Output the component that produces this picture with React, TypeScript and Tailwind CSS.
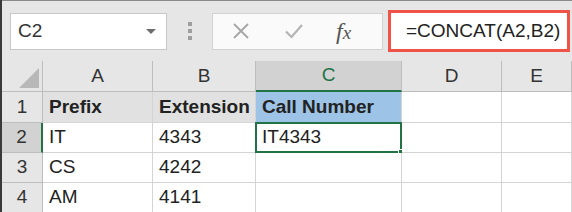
import React from 'react';

const cols = ['A', 'B', 'C', 'D', 'E'];

const rows = [
  { n: '1', cells: ['Prefix', 'Extension', 'Call Number', '', ''] },
  { n: '2', cells: ['IT', '4343', 'IT4343', '', ''] },
  { n: '3', cells: ['CS', '4242', '', '', ''] },
  { n: '4', cells: ['AM', '4141', '', '', ''] },
];

const rowH = ['h-[31px]', 'h-[30px]', 'h-[30px]', 'h-[30px]'];

export default function App() {
  return (
    <div
      className="w-[572px] h-[212px] overflow-hidden bg-white border-l-2 border-l-[#3a3a3a] text-[19px] text-[#222]"
      style={{ fontFamily: '"Liberation Sans", Arial, sans-serif' }}
    >
      {/* formula bar */}
      <div className="h-[61px] bg-[#e6e6e6] border-t border-t-[#8a8a8a] flex items-center">
        <div className="ml-[8px] w-[157px] h-[37px] bg-white border border-[#c8c8c8] flex items-center justify-between pl-[7px] pr-[10px]">
          <span className="text-[#333]">C2</span>
          <span className="w-0 h-0 border-l-[5px] border-r-[5px] border-t-[5px] border-l-transparent border-r-transparent border-t-[#6e6e6e]" />
        </div>
        <div className="ml-[21px] flex flex-col gap-[3px]">
          <span className="w-[4px] h-[4px] bg-[#9e9e9e]" />
          <span className="w-[4px] h-[4px] bg-[#9e9e9e]" />
          <span className="w-[4px] h-[4px] bg-[#9e9e9e]" />
        </div>
        <div className="ml-[20px] w-[171px] h-[37px] bg-[#fafafa] border border-[#d2d2d2] flex items-center">
          <svg className="ml-[19px]" width="18" height="18" viewBox="0 0 18 18">
            <path d="M2 2 L16 16 M16 2 L2 16" stroke="#a6a6a6" strokeWidth="1.8" fill="none" />
          </svg>
          <svg className="ml-[34px]" width="20" height="16" viewBox="0 0 20 16">
            <path d="M2 8.5 L7.5 14 L18 2" stroke="#b4b4b4" strokeWidth="2.2" fill="none" />
          </svg>
          <span
            className="ml-[32px] italic text-[#555] text-[24px] leading-none"
            style={{ fontFamily: '"Liberation Serif", "Times New Roman", serif' }}
          >
            f<span className="text-[19px]">x</span>
          </span>
        </div>
        <div className="ml-[5px] w-[182px] h-[42px] border-[3px] border-[#ef5247] bg-white flex items-center pl-[15px] text-[#222]">
          =CONCAT(A2,B2)
        </div>
      </div>

      {/* grid */}
      <div className="grid grid-cols-[41px_110px_103px_146px_100px_1fr]">
        {/* header row */}
        <div className="h-[31px] bg-[#e6e6e6] border-r border-b border-[#bdbdbd] relative">
          <svg className="absolute right-[3px] bottom-[3px]" width="20" height="20" viewBox="0 0 20 20">
            <path d="M20 0 L20 20 L0 20 Z" fill="#b8b8b8" />
          </svg>
        </div>
        {cols.map((c) => (
          <div
            key={c}
            className={
              c === 'C'
                ? 'h-[31px] bg-[#d2d2d2] border-r border-[#bdbdbd] border-b-2 border-b-[#217346] flex items-center justify-center text-[#217346]'
                : 'h-[31px] bg-[#e6e6e6] border-r border-b border-[#bdbdbd] flex items-center justify-center text-[#333]'
            }
          >
            {c}
          </div>
        ))}

        {rows.map((r, ri) => (
          <React.Fragment key={r.n}>
            <div
              className={
                r.n === '2'
                  ? `${rowH[ri]} bg-[#d2d2d2] border-b border-b-[#bdbdbd] border-r-2 border-r-[#217346] flex items-center justify-center text-[#333]`
                  : `${rowH[ri]} bg-[#e6e6e6] border-r border-b border-[#bdbdbd] flex items-center justify-center text-[#333]`
              }
            >
              {r.n}
            </div>
            {r.cells.map((v, ci) => {
              const header = r.n === '1';
              const active = r.n === '2' && ci === 2;
              let bg = 'bg-white';
              if (header && ci < 2) bg = 'bg-[#e1e1e1]';
              if (header && ci === 2) bg = 'bg-[#9dc3e6]';
              return (
                <div
                  key={ci}
                  className={`${rowH[ri]} ${bg} ${header ? 'font-bold' : ''} border-r border-b border-[#d4d4d4] flex items-center pl-[6px] whitespace-nowrap relative`}
                >
                  {v}
                  {active && (
                    <>
                      <span className="absolute -left-px -top-px -right-px -bottom-px border-2 border-[#217346]" />
                      <span className="absolute -right-[4px] -bottom-[4px] w-[7px] h-[7px] bg-[#217346] border border-white" />
                    </>
                  )}
                </div>
              );
            })}
          </React.Fragment>
        ))}
      </div>
    </div>
  );
}
